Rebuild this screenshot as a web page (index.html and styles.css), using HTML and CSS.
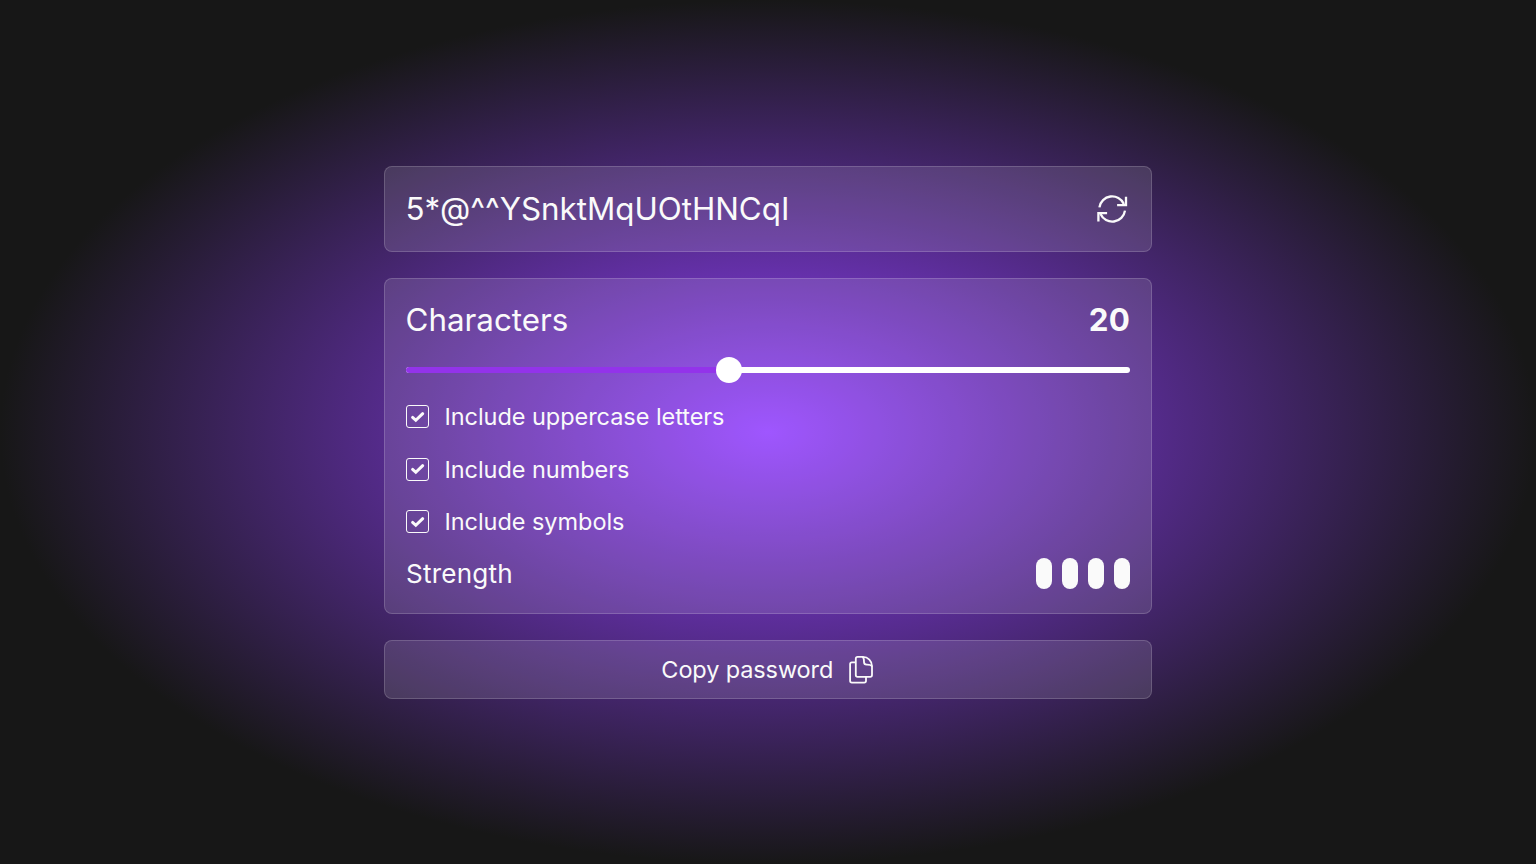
FILE: index.html
```html
<!DOCTYPE html>
<html lang="en">
<head>
<meta charset="utf-8">
<title>Password generator</title>
<link rel="stylesheet" href="styles.css">
</head>
<body>
<main class="generator">
  <section class="panel password">
    <span class="password-text">5*@^^YSnktMqUOtHNCqI</span>
    <button class="refresh" aria-label="Generate">
      <svg class="refresh-icon" viewBox="0 0 32 32"><path d="M3.4 14.4A12.9 12.9 0 0 1 27.9 10.9M29 17.6A12.9 12.9 0 0 1 4.5 21.1"/><path d="M30 3.8v8.4h-8.9M2.4 28.6v-8.4h8.7"/></svg>
    </button>
  </section>
  <section class="panel options">
    <div class="row"><span class="characters">Characters</span><strong class="count">20</strong></div>
    <div class="slider"><div class="track"></div><div class="fill"></div><div class="thumb"></div></div>
    <div class="checks">
      <label class="check"><span class="box"><svg viewBox="0 0 24 24"><path d="M6.6 12.4l3.2 2.9 6.9-6.6"/></svg></span><span>Include uppercase letters</span></label>
      <label class="check"><span class="box"><svg viewBox="0 0 24 24"><path d="M6.6 12.4l3.2 2.9 6.9-6.6"/></svg></span><span>Include numbers</span></label>
      <label class="check"><span class="box"><svg viewBox="0 0 24 24"><path d="M6.6 12.4l3.2 2.9 6.9-6.6"/></svg></span><span>Include symbols</span></label>
    </div>
    <div class="row strength"><span>Strength</span><div class="bars"><i></i><i></i><i></i><i></i></div></div>
  </section>
  <button class="panel copy"><span>Copy password</span>
    <svg class="copy-icon" viewBox="0 0 26 30"><path d="M8.6 1.9h5.2c5.2 0 9.2 4 9.2 9.3v8.9a1.8 1.8 0 0 1-1.8 1.8H8.6a1.8 1.8 0 0 1-1.8-1.8V3.7a1.8 1.8 0 0 1 1.8-1.8z"/><path d="M13.2 1.9c2 .6 1.8 2.8 1.8 5.1 0 1.9.8 2.7 2.7 2.7 2.5 0 4.6-.1 5.3 2"/><path d="M6.8 7.3H2.9a1.8 1.8 0 0 0-1.8 1.8v16.7a1.8 1.8 0 0 0 1.8 1.8h12.3a1.8 1.8 0 0 0 1.8-1.8V22"/></svg>
  </button>
</main>
</body>
</html>
```
FILE: styles.css
```css
* { box-sizing: border-box; }
body {
  margin: 0;
  min-height: 100vh;
  display: flex;
  align-items: center;
  justify-content: center;
  font-family: Inter, "Liberation Sans", sans-serif;
  color: #fafafa;
  background: radial-gradient(#923fff, #171717 70.7%);
}
button { font: inherit; color: inherit; background: none; border: 0; padding: 0; }
svg { fill: none; stroke: #fafafa; }
.generator { width: 768px; display: flex; flex-direction: column; gap: 26px; padding-top: 1px; }
.panel {
  border: 1px solid rgba(255, 255, 255, .17);
  border-radius: 8px;
  background: rgba(255, 255, 255, .12);
}
.row, .password { display: flex; align-items: center; justify-content: space-between; }
.password { height: 86px; padding: 0 21px; }
.password-text, .characters, .count { font-size: 31.33px; line-height: 40px; }
.password-text, .characters { margin-left: -.5px; }
.refresh { width: 32px; height: 32px; margin-right: 2px; }
.refresh-icon { display: block; width: 32px; height: 32px; stroke-width: 2.3; }
.options { height: 336px; padding: 21px 21px 0; }
.count { font-weight: 700; letter-spacing: .2px; }
.slider { position: relative; height: 26px; margin-top: 17px; display: flex; align-items: center; }
.track { width: 100%; height: 6px; border-radius: 3px; background: #fff; }
.fill { position: absolute; left: 0; top: 10px; width: 323px; height: 6px; border-radius: 3px 0 0 3px; background: #9333ea; }
.thumb { position: absolute; left: 310px; top: 0; width: 26px; height: 26px; border-radius: 50%; background: #fff; }
.checks { margin-top: 19px; display: flex; flex-direction: column; gap: 23.6px; }
.check { display: flex; align-items: center; gap: 15.5px; height: 29px; font-size: 23.5px; line-height: 29px; letter-spacing: -.05px; }
.box { width: 23px; height: 23px; border: 1px solid #fafafa; border-radius: 3px; display: flex; align-items: center; justify-content: center; }
.box svg { width: 24px; height: 24px; flex: none; stroke-width: 3; stroke-linecap: round; }
.strength { height: 32px; margin-top: 21.6px; font-size: 26.1px; letter-spacing: .2px; }
.bars { display: flex; gap: 10px; }
.bars i { width: 16px; height: 31px; border-radius: 8px; background: #fafafa; }
.copy { height: 59px; display: flex; align-items: center; justify-content: center; gap: 15.5px; font-size: 23.5px; letter-spacing: -.12px; }
.copy-icon { width: 26px; height: 30px; stroke-width: 1.8; }
```
